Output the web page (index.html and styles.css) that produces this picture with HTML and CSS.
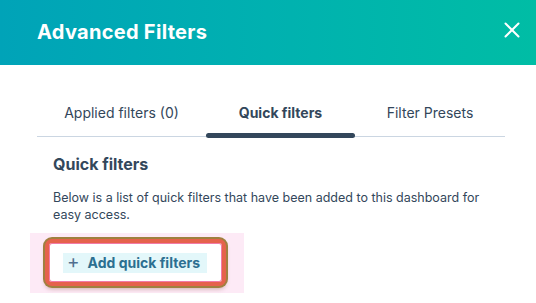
FILE: index.html
```html
<!DOCTYPE html>
<html>
<head>
<meta charset="utf-8">
<link rel="stylesheet" href="styles.css">
</head>
<body>
<div class="panel">
  <header class="header">
    <h1 class="title">Advanced Filters</h1>
    <button class="close" aria-label="Close">
      <svg width="16" height="16" viewBox="0 0 16 16"><path d="M1.5 1.5L14.5 14.5M14.5 1.5L1.5 14.5" stroke="#fff" stroke-width="2" stroke-linecap="round"/></svg>
    </button>
  </header>
  <div class="body">
    <nav class="tabs">
      <div class="tab t1">Applied filters (0)</div>
      <div class="tab t2 active">Quick filters</div>
      <div class="tab t3">Filter Presets</div>
    </nav>
    <section class="content">
      <h2 class="heading">Quick filters</h2>
      <p class="desc">Below is a list of quick filters that have been added to this dashboard for easy access.</p>
      <div class="glow">
        <div class="mark">
          <button class="add"><span class="plus">+</span><span>Add quick filters</span></button>
        </div>
      </div>
    </section>
  </div>
</div>
</body>
</html>
```

FILE: styles.css
```css
* { box-sizing: border-box; }
html, body { margin: 0; padding: 0; background: #fff; }
body { width: 536px; height: 303px; overflow: hidden; font-family: "Inter", "Lato", sans-serif; color: #33475b; }
.panel { display: flex; flex-direction: column; }
.header {
  height: 65px;
  display: flex;
  align-items: center;
  justify-content: space-between;
  padding: 0 15px 0 37px;
  background: linear-gradient(90deg, #00a3b8 0%, #00b1b0 50%, #00bda5 100%);
}
.title { margin: 0; font-size: 20px; font-weight: 700; color: #fff; letter-spacing: 0.3px; padding-bottom: 2px; }
.close { border: 0; background: none; padding: 0; width: 18px; height: 18px; display: flex; align-items: center; justify-content: center; margin-top: -6px; }
.body { padding: 0 31px 0 37px; }
.tabs { display: flex; border-bottom: 1px solid #cbd6e2; margin-top: 32px; }
.tab {
  text-align: center;
  font-size: 14px;
  height: 39px;
  line-height: 32px;
  color: #33475b;
  position: relative;
}
.t1 { width: 169px; }
.t2 { width: 149px; }
.t3 { flex: 1; }
.tab.active { font-weight: 700; }
.tab.active::after {
  content: "";
  position: absolute;
  left: 0; right: 0; bottom: -2px;
  height: 5px;
  border-radius: 3px;
  background: #33475b;
}
.content { padding: 0 16px; }
.heading { margin: 16px 0 0; font-size: 16px; font-weight: 700; line-height: 22px; }
.desc { margin: 14px 0 0; font-size: 12.5px; line-height: 17px; max-width: 430px; }
.glow {
  margin: 10px 0 0 -23px;
  width: 214px;
  padding: 6px 14px 7px 15px;
  background: #fdeaf6;
}
.mark {
  width: 181px;
  height: 47px;
  border: 4px solid #e5624c;
  border-radius: 7px;
  box-shadow: 0 0 0 2px #a0803f, 0 3px 4px rgba(120, 60, 40, 0.35), inset 0 0 0 1px #f27aa8;
  background: #fff;
  display: flex;
  align-items: center;
  padding-left: 14px;
}
.add {
  border: 0;
  padding: 0 7px 0 4px;
  height: 20px;
  display: flex;
  align-items: center;
  gap: 8px;
  background: #e3f7fa;
  font-family: inherit;
  font-size: 14px;
  font-weight: 700;
  color: #2c6f91;
}
.plus { font-weight: 400; font-size: 19px; color: #516f90; line-height: 1; margin-top: -2px; }
```
